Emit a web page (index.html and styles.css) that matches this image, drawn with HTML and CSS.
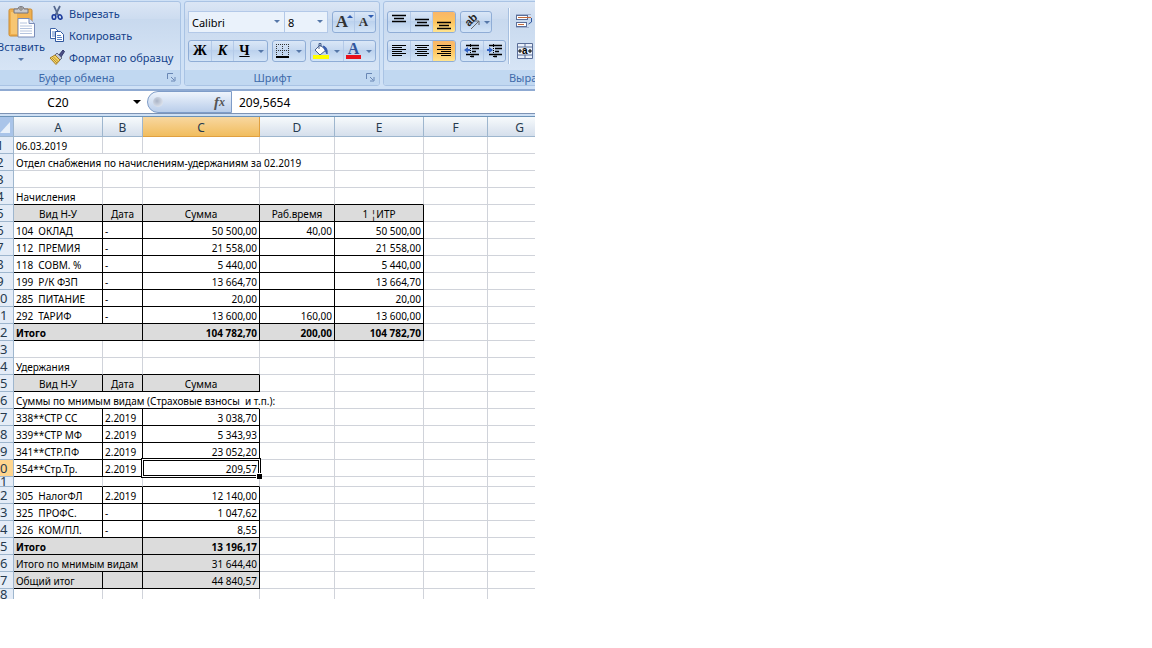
FILE: index.html
```html
<!DOCTYPE html>
<html lang="ru">
<head>
<meta charset="utf-8">
<title>Отдел снабжения</title>
<link rel="stylesheet" href="styles.css">
</head>
<body>
<main class="app">
  <div class="ribbon">
    <section class="group clipboard">
      <div class="group-body">
        <button class="paste" type="button">
          <svg width="28" height="32" viewBox="0 0 28 32"><rect x="1" y="3" width="23" height="27" rx="1.500" fill="#efb04f" stroke="#c98a34"/><rect x="3" y="6" width="6" height="22" fill="#f7c672"/><path d="M6 3h4q0-2.500 3-2.500t3 2.500h4v4H6z" fill="#c9c9cc" stroke="#74747c"/><circle cx="13" cy="3" r="1.200" fill="#fff" stroke="#666"/><path d="M10 12.500h11l5.500 5V31H10z" fill="#fff" stroke="#7a8db8"/><path d="M21 12.500v5h5.500" fill="#dbe5f5" stroke="#7a8db8"/><path d="M12 17h7M12 20h12M12 22.500h12M12 25h12M12 27.500h12" stroke="#b5c4de"/></svg>
          <span>Вставить</span>
          <i class="caret"></i>
        </button>
        <div class="clip-list">
          <button type="button"><svg width="16" height="16" viewBox="0 0 16 16"><path d="M5 1l4 9M11 1L6.500 10" stroke="#55688f" stroke-width="1.800"/><ellipse cx="5" cy="12" rx="1.800" ry="2.300" fill="none" stroke="#1d3c9c" stroke-width="1.600"/><ellipse cx="11" cy="12" rx="1.800" ry="2.300" fill="none" stroke="#1d3c9c" stroke-width="1.600" transform="rotate(-25 11 12)"/></svg>Вырезать</button>
          <button type="button"><svg width="16" height="16" viewBox="0 0 16 16"><path d="M1.500 1.500h5l3 3v7h-8z" fill="#fff" stroke="#3e64a8"/><path d="M3 5h4M3 7h4M3 9h3" stroke="#5b84c4"/><path d="M6.500 4.500h5l3 3v7h-8z" fill="#fff" stroke="#2f569e"/><path d="M8 8.500h4M8 10.500h5M8 12.500h5" stroke="#5b84c4"/></svg>Копировать</button>
          <button type="button"><svg width="16" height="16" viewBox="0 0 16 16"><path d="M10 6l4-5 1.500 1.500L12 8z" fill="#4b4f86" stroke="#33376b"/><path d="M8 4l5 5-2 2-5-5z" fill="#c3c8d4" stroke="#666e86"/><path d="M6 6l5 5-4 4.500L1 9z" fill="#f2d566" stroke="#a37a24"/><path d="M3 9l5 5M4.500 8l5 5" stroke="#b98d2f"/></svg>Формат по образцу</button>
        </div>
      </div>
      <footer><span>Буфер обмена</span><button class="launcher" type="button" aria-label="Параметры буфера"><svg width="9" height="9" viewBox="0 0 9 9"><path d="M.5 6V.5H6M4 4l3 3M8 4v4H4" fill="none" stroke="#6886b4"/></svg></button></footer>
    </section>

    <section class="group font">
      <div class="group-body rows">
        <div class="tools">
          <div class="combos">
            <label class="combo face"><select aria-label="Шрифт"><option>Calibri</option></select><i class="caret"></i></label>
            <label class="combo size"><select aria-label="Размер"><option>8</option></select><i class="caret"></i></label>
          </div>
          <div class="cluster">
            <button class="big-a" type="button" aria-label="Увеличить">A<i class="tick up"></i></button>
            <button class="small-a" type="button" aria-label="Уменьшить">A<i class="tick"></i></button>
          </div>
        </div>
        <div class="tools">
          <div class="cluster">
            <button class="letter" type="button">Ж</button>
            <button class="letter italic" type="button">К</button>
            <button class="letter under" type="button">Ч</button>
            <button class="drop" type="button" aria-label="Подчёркивание"><i class="caret"></i></button>
          </div>
          <div class="cluster">
            <button type="button" class="narrow" aria-label="Границы"><svg width="14" height="14" viewBox="0 0 14 14"><path d="M.5 0v13M6.500 0v13M12.500 0v13M0 .5h13M0 6.500h13" stroke="#333" stroke-dasharray="1 1"/><path d="M0 13h13" stroke="#000" stroke-width="2"/></svg></button>
            <button class="drop" type="button" aria-label="Виды границ"><i class="caret"></i></button>
          </div>
          <div class="cluster">
            <button type="button" class="narrow" aria-label="Заливка"><svg width="18" height="18" viewBox="0 0 18 18"><path d="M3 8l5-5 6 5-6 5z" fill="#fff" stroke="#47608f"/><path d="M7 7V1.500h2V5" fill="none" stroke="#47608f"/><path d="M11 4q5 1 4 8l-2-4z" fill="#3a5fae" stroke="#3a5fae"/><path d="M1 13h16v4H1z" fill="#ff0"/></svg></button>
            <button class="drop" type="button" aria-label="Цвет заливки"><i class="caret"></i></button>
            <button type="button" class="font-color narrow" aria-label="Цвет текста">A</button>
            <button class="drop" type="button" aria-label="Выбор цвета"><i class="caret"></i></button>
          </div>
        </div>
      </div>
      <footer><span>Шрифт</span><button class="launcher" type="button" aria-label="Параметры шрифта"><svg width="9" height="9" viewBox="0 0 9 9"><path d="M.5 6V.5H6M4 4l3 3M8 4v4H4" fill="none" stroke="#6886b4"/></svg></button></footer>
    </section>

    <section class="group align">
      <div class="group-body split">
        <div class="rows">
          <div class="tools">
            <div class="cluster wide">
              <button type="button" aria-label="По верхнему краю"><svg width="14" height="16" viewBox="0 0 14 16"><path d="M0 1.500h14M2 4.500h10M0 7.500h14" stroke="#000" stroke-width="1.500"/></svg></button>
              <button type="button" aria-label="По середине"><svg width="14" height="16" viewBox="0 0 14 16"><path d="M0 5.500h14M2 8.500h10M0 11.500h14" stroke="#000" stroke-width="1.500"/></svg></button>
              <button type="button" class="on" aria-label="По нижнему краю"><svg width="14" height="16" viewBox="0 0 14 16"><path d="M0 8.500h14M2 11.500h10M0 14.500h14" stroke="#000" stroke-width="1.500"/></svg></button>
            </div>
            <div class="cluster">
              <button type="button" aria-label="Ориентация"><svg width="17" height="16" viewBox="0 0 17 16"><text x="0" y="0" class="ab" transform="translate(5 13) rotate(-45)">ab</text><path d="M7 15l8-8M15 11V7h-4" fill="none" stroke="#666"/></svg></button>
              <button class="drop" type="button" aria-label="Виды ориентации"><i class="caret"></i></button>
            </div>
          </div>
          <div class="tools">
            <div class="cluster wide">
              <button type="button" aria-label="По левому краю"><svg width="14" height="12" viewBox="0 0 14 12"><path d="M0 .5h14M0 2.500h10M0 4.500h14M0 6.500h10M0 8.500h14M0 10.500h10" stroke="#000"/></svg></button>
              <button type="button" aria-label="По центру"><svg width="14" height="12" viewBox="0 0 14 12"><path d="M0 .5h14M2 2.500h10M0 4.500h14M2 6.500h10M0 8.500h14M2 10.500h10" stroke="#000"/></svg></button>
              <button type="button" class="on" aria-label="По правому краю"><svg width="14" height="12" viewBox="0 0 14 12"><path d="M0 .5h14M4 2.500h10M0 4.500h14M4 6.500h10M0 8.500h14M4 10.500h10" stroke="#000"/></svg></button>
            </div>
            <div class="cluster">
              <button type="button" aria-label="Уменьшить отступ"><svg width="16" height="14" viewBox="0 0 16 14"><path d="M2 1.500h13M8 4.500h7M8 7.500h4M2 10.500h13M7 12.500h3" stroke="#000" stroke-width="1.500"/><path d="M6.500 0v14" stroke="#000" stroke-dasharray="1 1"/><path d="M0 6l4-3v2h2v2H4v2z" fill="#3464c4"/></svg></button>
              <button type="button" aria-label="Увеличить отступ"><svg width="16" height="14" viewBox="0 0 16 14"><path d="M2 1.500h13M8 4.500h7M8 7.500h4M2 10.500h13M7 12.500h3" stroke="#000" stroke-width="1.500"/><path d="M6.500 0v14" stroke="#000" stroke-dasharray="1 1"/><path d="M6 6L2 3v2H0v2h2v2z" fill="#3464c4"/></svg></button>
            </div>
          </div>
        </div>
        <div class="wrap-tools">
          <button type="button" aria-label="Перенос текста"><svg width="17" height="16" viewBox="0 0 17 16"><path d="M0 1.500h15M0 14.500h13" stroke="#9fb0cf"/><rect x=".5" y="2.500" width="11" height="4" fill="#fff" stroke="#5b6e98"/><rect x=".5" y="9.500" width="10" height="4" fill="#fff" stroke="#5b6e98"/><path d="M2 4.500h13M2 11.500h6" stroke="#c46a3c"/><path d="M15.500 5v4l-3 2" fill="none" stroke="#2f569e"/></svg></button>
          <button type="button" aria-label="Объединить"><svg width="16" height="16" viewBox="0 0 16 16"><path d="M.5.5h15v15H.5zM.5 4h15M.5 12h15M8 0v4M8 12v4" fill="#e9f0fb" stroke="#5b6e98"/><path d="M1 8h4M11 8h4M3 6v4M13 6v4" stroke="#000"/><text x="5" y="11" class="merge-a">a</text></svg></button>
        </div>
      </div>
      <footer><span>Выравнивание</span></footer>
    </section>
  </div>

  <div class="formula-bar">
    <label class="name-box"><input value="C20" aria-label="Имя ячейки"><i class="caret dark"></i></label>
    <div class="fx"><i class="knob"></i><button type="button" aria-label="Вставить функцию">f<small>x</small></button></div>
    <input class="formula" value="209,5654" aria-label="Формула">
  </div>

  <div class="sheet">
    <table>
      <colgroup><col class="w-head"><col class="w-a"><col class="w-b"><col class="w-c"><col class="w-d"><col class="w-a"><col class="w-f"><col class="w-f"></colgroup>
      <thead><tr><th class="corner"><svg width="12" height="12" viewBox="0 0 12 12"><path d="M10 0v11H0z" fill="#e8f0fa"/></svg></th><th>A</th><th>B</th><th class="active">C</th><th>D</th><th>E</th><th>F</th><th>G</th></tr></thead>
      <tbody>
        <tr><th>1</th><td>06.03.2019</td><td></td><td></td><td></td><td></td><td></td><td></td></tr>
        <tr><th>2</th><td colspan="4">Отдел снабжения по начислениям-удержаниям за 02.2019</td><td></td><td></td><td></td></tr>
        <tr><th>3</th><td></td><td></td><td></td><td></td><td></td><td></td><td></td></tr>
        <tr><th>4</th><td class="line">Начисления</td><td class="line"></td><td class="line"></td><td class="line"></td><td class="line"></td><td></td><td></td></tr>
        <tr><th>5</th><td class="box head">Вид Н-У</td><td class="box head">Дата</td><td class="box head">Сумма</td><td class="box head">Раб.время</td><td class="box head">1 ¦ИТР</td><td></td><td></td></tr>
        <tr><th>6</th><td class="box">104&nbsp; ОКЛАД</td><td class="box">-</td><td class="box num">50 500,00</td><td class="box num">40,00</td><td class="box num">50 500,00</td><td></td><td></td></tr>
        <tr><th>7</th><td class="box">112&nbsp; ПРЕМИЯ</td><td class="box">-</td><td class="box num">21 558,00</td><td class="box"></td><td class="box num">21 558,00</td><td></td><td></td></tr>
        <tr><th>8</th><td class="box">118&nbsp; СОВМ. %</td><td class="box">-</td><td class="box num">5 440,00</td><td class="box"></td><td class="box num">5 440,00</td><td></td><td></td></tr>
        <tr><th>9</th><td class="box">199&nbsp; Р/К ФЗП</td><td class="box">-</td><td class="box num">13 664,70</td><td class="box"></td><td class="box num">13 664,70</td><td></td><td></td></tr>
        <tr><th>10</th><td class="box">285&nbsp; ПИТАНИЕ</td><td class="box">-</td><td class="box num">20,00</td><td class="box"></td><td class="box num">20,00</td><td></td><td></td></tr>
        <tr><th>11</th><td class="box">292&nbsp; ТАРИФ</td><td class="box">-</td><td class="box num">13 600,00</td><td class="box num">160,00</td><td class="box num">13 600,00</td><td></td><td></td></tr>
        <tr class="bold"><th>12</th><td class="box fill" colspan="2">Итого</td><td class="box fill num">104 782,70</td><td class="box fill num">200,00</td><td class="box fill num">104 782,70</td><td></td><td></td></tr>
        <tr><th>13</th><td></td><td></td><td></td><td></td><td></td><td></td><td></td></tr>
        <tr><th>14</th><td class="line">Удержания</td><td class="line"></td><td class="line"></td><td></td><td></td><td></td><td></td></tr>
        <tr><th>15</th><td class="box head">Вид Н-У</td><td class="box head">Дата</td><td class="box head">Сумма</td><td></td><td></td><td></td><td></td></tr>
        <tr><th>16</th><td class="line open" colspan="3">Суммы по мнимым видам (Страховые взносы&nbsp; и т.п.):</td><td></td><td></td><td></td><td></td></tr>
        <tr><th>17</th><td class="box">338**СТР СС</td><td class="box">2.2019</td><td class="box num">3 038,70</td><td></td><td></td><td></td><td></td></tr>
        <tr><th>18</th><td class="box">339**СТР МФ</td><td class="box">2.2019</td><td class="box num">5 343,93</td><td></td><td></td><td></td><td></td></tr>
        <tr><th>19</th><td class="box">341**СТР.ПФ</td><td class="box">2.2019</td><td class="box num">23 052,20</td><td></td><td></td><td></td><td></td></tr>
        <tr><th class="active">20</th><td class="box">354**Стр.Тр.</td><td class="box">2.2019</td><td class="box num selected">209,57</td><td></td><td></td><td></td><td></td></tr>
        <tr class="short"><th><span>21</span></th><td class="line"></td><td class="line"></td><td class="line"></td><td></td><td></td><td></td><td></td></tr>
        <tr><th>22</th><td class="box">305&nbsp; НалогФЛ</td><td class="box">2.2019</td><td class="box num">12 140,00</td><td></td><td></td><td></td><td></td></tr>
        <tr><th>23</th><td class="box">325&nbsp; ПРОФС.</td><td class="box">-</td><td class="box num">1 047,62</td><td></td><td></td><td></td><td></td></tr>
        <tr><th>24</th><td class="box">326&nbsp; КОМ/ПЛ.</td><td class="box">-</td><td class="box num">8,55</td><td></td><td></td><td></td><td></td></tr>
        <tr class="bold"><th>25</th><td class="box fill" colspan="2">Итого</td><td class="box fill num">13 196,17</td><td></td><td></td><td></td><td></td></tr>
        <tr><th>26</th><td class="box fill" colspan="2">Итого по мнимым видам</td><td class="box fill num">31 644,40</td><td></td><td></td><td></td><td></td></tr>
        <tr><th>27</th><td class="box fill">Общий итог</td><td class="box fill"></td><td class="box fill num">44 840,57</td><td></td><td></td><td></td><td></td></tr>
        <tr class="short last"><th><span>28</span></th><td></td><td></td><td></td><td></td><td></td><td></td><td></td></tr>
      </tbody>
    </table>
  </div>
</main>
</body>
</html>
```
FILE: styles.css
```css
* { box-sizing: border-box; }
body { margin: 0; background: #fff; font-family: "Noto Sans", "Open Sans", sans-serif; font-size: 11px; color: #000; }
button, input, select { margin: 0; padding: 0; border: 0; background: none; font: inherit; color: inherit; }
button { display: flex; align-items: center; justify-content: center; }
svg { display: block; flex: none; }

.app { width: 46.44%; overflow: hidden; }

/* Ribbon */
.ribbon { display: flex; gap: 3px; padding: 1px 0 3px; background: #cfe1f6; border-bottom: 2px solid #8faad2; }
.group { flex: none; display: flex; flex-direction: column; border: 1px solid #a9c3e4; border-radius: 3px; overflow: hidden; background: linear-gradient(#dbe6f5, #cddcf0 20%, #c8d9ee 21%, #dbe8f8); }
.group-body { height: 68px; }
.group footer { display: flex; align-items: center; height: 15px; padding-right: 4px; background: #c1d8f1; color: #3e6aaa; }
.group footer span { flex: 1; text-align: center; line-height: 15px; }
.launcher { width: 9px; }
.clipboard { width: 211px; margin-left: -30px; }
.clipboard .group-body { display: flex; gap: 5px; padding-left: 27px; color: #15428b; }
.clipboard footer { padding-left: 15px; }
.font { width: 196px; }
.font footer span { padding-right: 6px; }
.align { width: 336px; }

.paste { flex-direction: column; justify-content: flex-start; width: 46px; padding-top: 4px; line-height: 17px; }
.paste svg { margin-left: 2px; }
.paste .caret { margin-top: 3px; }
.clip-list { display: flex; flex-direction: column; }
.clip-list button { justify-content: flex-start; gap: 4px; height: 22px; white-space: nowrap; }

.caret { width: 0; height: 0; border: 3px solid transparent; border-top-color: #5577a8; border-bottom: 0; }
.caret.dark { border-width: 4px; border-bottom: 0; border-top-color: #000; }

.rows { display: flex; flex-direction: column; gap: 7px; padding: 9px 3px 0; }
.tools { display: flex; gap: 4px; }
.combos { display: flex; }
.combo { position: relative; height: 22px; border: 1px solid #b3c9e8; background: #eaf2fb; }
.combo select { appearance: none; width: 100%; height: 20px; padding-left: 3px; font-size: 11px; }
.combo .caret { position: absolute; right: 4px; top: 8px; }
.face { width: 97px; }
.size { width: 43px; border-left: 0; }

.cluster { display: flex; height: 22px; border: 1px solid #8fadd6; border-radius: 3px; overflow: hidden; background: linear-gradient(#dae7f7, #c5d8f0 45%, #bbd1ed 46%, #d3e4f7); }
.cluster button { position: relative; width: 22px; height: 20px; }
.cluster button + button:not(.drop) { border-left: 1px solid #b4cae8; }
.cluster .drop { width: 12px; }
.cluster .narrow { width: 20px; }
.cluster .on { background: linear-gradient(#f9b668, #fdc45e 50%, #ffe48f); }
.wide button { width: 22px; }
.wide .on { width: 23px; }
.letter, .big-a, .small-a, .font-color { font-family: "Liberation Serif", serif; font-weight: bold; font-size: 15px; }
.letter { color: #000; }
.cluster .letter { font-size: 14px; }
.cluster .italic { font-style: italic; }
.under { text-decoration: underline; }
.cluster .big-a { font-size: 17px; color: #333; padding-right: 3px; }
.cluster .small-a { font-size: 13px; color: #333; padding-right: 3px; }
.tick { position: absolute; right: 1px; top: 3px; border: 3px solid transparent; border-top-color: #2d5bb0; border-bottom: 0; }
.tick.up { border-top: 0; border-bottom: 3px solid #2d5bb0; }
.cluster .font-color { color: #31559c; line-height: 12px; font-size: 16px; padding-bottom: 4px; }
.font-color::after { content: ""; position: absolute; left: 2px; right: 2px; bottom: 2px; height: 4px; background: #e8101c; }

.split { display: flex; }
.split .drop { width: 8px; }
.wrap-tools { display: flex; flex-direction: column; gap: 14px; margin-top: 6px; padding: 5px 0 0 6px; height: 56px; border-left: 1px solid #f4f9ff; box-shadow: -1px 0 #a6bfdf; }
.wrap-tools button { flex: none; width: 17px; }
.ab { font: bold 11px "Liberation Sans", sans-serif; fill: #222; }
.merge-a { font: bold 10px "Liberation Sans", sans-serif; }

/* Formula bar */
.formula-bar { display: flex; height: 23px; border-bottom: 1px solid #7d93b5; }
.name-box { display: flex; align-items: center; width: 147px; padding-right: 6px; }
.name-box input { flex: 1; min-width: 0; text-align: center; font-size: 12px; padding-right: 17px; }
.fx { display: flex; align-items: center; justify-content: space-between; width: 85px; padding: 0 6px 0 5px; border: 1px solid #7e9cc8; border-radius: 11px 0 0 11px; background: linear-gradient(#eef4fc, #b9cdea); }
.knob { width: 10px; height: 10px; border-radius: 50%; background: radial-gradient(circle at 4px 4px, #a9b3c6, #eef3fa); }
.fx button { font: italic bold 15px "Liberation Serif", serif; color: #555; }
.fx small { font-size: 12px; }
.formula { flex: 1; min-width: 0; padding-left: 7px; font-size: 12px; }

/* Sheet */
.sheet { overflow: hidden; border-top: 2px solid #cfe0f4; }
table { width: 565px; margin-left: -13px; table-layout: fixed; border-collapse: separate; border-spacing: 0; border-top: 1px solid #6c93b8; font-size: 10px; }
.w-head { width: 27px; }
.w-a { width: 89px; }
.w-b { width: 40px; }
.w-c { width: 117px; }
.w-d { width: 75px; }
.w-f { width: 64px; }
th, td { padding: 0; border-right: 1px solid #d0d3da; border-bottom: 1px solid #d0d3da; white-space: nowrap; }
th { font-weight: normal; font-size: 12px; color: #263a4e; }
thead th { height: 20px; padding-top: 2px; line-height: 17px; border-color: #9eb6ce; background: linear-gradient(#f7fafc, #d5dfec); }
thead th.active { background: linear-gradient(#f8d7a0, #f1bd5e); border-color: #e0a040; }
thead .corner { background: #a9c4e9; }
.corner svg { margin-left: 13px; }
tbody th { line-height: 16px; font-size: 13px; background: #e4ecf7; border-color: #9eb6ce; }
tbody th.active { background: #ffd58d; }
td { height: 17px; padding: 2px 2px 0; line-height: 14px; overflow: hidden; }
.line { border-bottom-color: #000; }
.box { border-color: #000; }
.open { border-right-color: transparent; overflow: visible; }
.fill, .head { background: #dcdcdc; }
.head { text-align: center; }
.num { text-align: right; padding-right: 2px; }
.bold td { font-weight: bold; }
.short th, .short td { height: 10px; line-height: 9px; padding: 0; }
.short th span { display: block; height: 9px; overflow: hidden; }
.last th, .last td { border-bottom: 0; }
.selected { position: relative; overflow: visible; }
.selected::before { content: ""; position: absolute; inset: -1px; border: 1px solid #fff; box-shadow: 0 0 0 1px #000, inset 0 0 0 1px #000; }
.selected::after { content: ""; position: absolute; right: -3px; bottom: -3px; width: 5px; height: 5px; border: 1px solid #fff; border-right: 0; border-bottom: 0; background: #000; }
```
